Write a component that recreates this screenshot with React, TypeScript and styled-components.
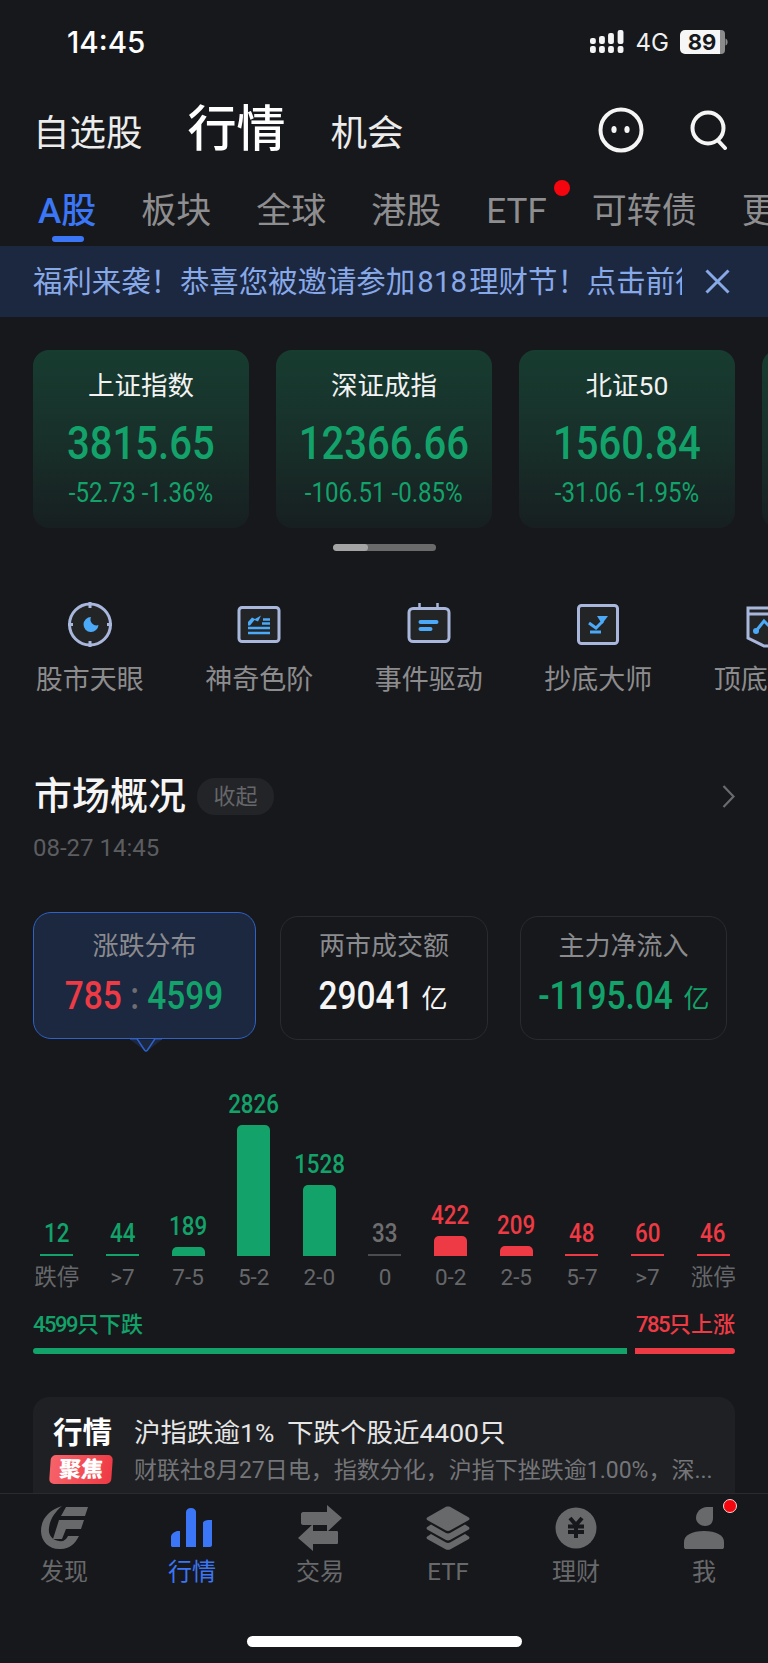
import React from 'react'
import styled, { createGlobalStyle } from 'styled-components'

const GREEN = '#12a26a'
const RED = '#ee3a44'
const BLUE = '#3a76f5'
const toneColor = { up: RED, down: GREEN, flat: '#6e6e70' }
type Tone = keyof typeof toneColor

const GlobalStyle = createGlobalStyle`
  html, body { margin: 0; padding: 0; background: #17181b; }
  body { font-family: Roboto, "Noto Sans CJK SC", sans-serif; }
`

const Page = styled.div`
  width: 768px;
  height: 1663px;
  display: flex;
  flex-direction: column;
  overflow: hidden;
  background: #17181b;
  color: #f2f2f2;
`

const Scroller = styled.main`
  flex: 1;
  min-height: 0;
  overflow: hidden;
`

/* narrow digits, the app uses a DIN style face */
const Din = styled.span<{ $x?: number }>`
  display: inline-block;
  transform: scaleX(${(p) => p.$x ?? 0.88});
`

const StatusBar = styled.div`
  height: 100px;
  box-sizing: border-box;
  padding: 24px 40px 0 67px;
  display: flex;
  justify-content: space-between;
  align-items: flex-start;
`

const Clock = styled.div`
  font-family: Inter, sans-serif;
  font-size: 29.6px;
  line-height: 36px;
  font-weight: 500;
  color: #fff;
`

const StatusIcons = styled.div`
  display: flex;
  align-items: center;
  height: 36px;
`

const Network = styled.span`
  font-family: Inter, sans-serif;
  font-size: 24px;
  color: #f0f0f0;
  margin: 0 11px 0 12px;
`

const Header = styled.header`
  height: 60px;
  padding: 0 40px 0 33px;
  display: flex;
  align-items: baseline;
  gap: 45px;
`

const HeadLink = styled.div<{ $active?: boolean }>`
  font-size: ${(p) => (p.$active ? 49 : 36.5)}px;
  line-height: 60px;
  font-weight: ${(p) => (p.$active ? 500 : 400)};
  color: ${(p) => (p.$active ? '#fff' : '#ececec')};
`

const HeadTools = styled.div`
  margin-left: auto;
  align-self: center;
  display: flex;
  align-items: center;
  gap: 46px;
`

const Tabs = styled.nav`
  height: 86px;
  box-sizing: border-box;
  padding: 30px 0 0 38px;
  display: flex;
  gap: 45px;
  overflow: hidden;
  white-space: nowrap;
`

const Tab = styled.div<{ $active?: boolean }>`
  position: relative;
  flex: none;
  font-size: 35px;
  line-height: 44px;
  height: 44px;
  color: ${(p) => (p.$active ? BLUE : '#8e8e90')};
  font-weight: ${(p) => (p.$active ? 500 : 400)};

  ${(p) =>
    p.$active &&
    `&::after {
      content: '';
      position: absolute;
      left: 14px;
      top: 46px;
      width: 32px;
      height: 6px;
      border-radius: 3px;
      background: ${BLUE};
    }`}
`

const TabDot = styled.i`
  position: absolute;
  right: -23px;
  top: -10px;
  width: 16px;
  height: 16px;
  border-radius: 50%;
  background: #f5060f;
`

const Banner = styled.div`
  height: 71px;
  box-sizing: border-box;
  padding: 0 38px 0 33px;
  display: flex;
  align-items: center;
  justify-content: space-between;
  background: #1c2740;
  color: #88a9e8;
`

const BannerText = styled.div`
  width: 649px;
  overflow: hidden;
  white-space: nowrap;
  font-size: 29.4px;
  line-height: 40px;
  word-spacing: -5px;
`

const IndexRow = styled.section`
  margin-top: 33px;
  padding-left: 33px;
  display: flex;
  gap: 27px;
  overflow: hidden;
`

const IndexCard = styled.div`
  flex: none;
  width: 216px;
  height: 178px;
  border-radius: 16px;
  background: linear-gradient(180deg, #173c30 0%, #18302a 50%, #171f20 100%);
  display: flex;
  flex-direction: column;
  align-items: center;
`

const IndexName = styled.div`
  margin-top: 18px;
  font-size: 26.5px;
  line-height: 36px;
  color: #f2f2f2;
`

const IndexValue = styled.div`
  margin-top: 12px;
  font-size: 46px;
  line-height: 54px;
  font-weight: 500;
  color: ${GREEN};
`

const IndexChange = styled.div`
  margin-top: 7px;
  font-size: 28px;
  line-height: 32px;
  color: ${GREEN};
  white-space: nowrap;
`

const PagerTrack = styled.div`
  margin: 16px auto 0;
  width: 103px;
  height: 7px;
  border-radius: 4px;
  background: #6a6a6a;
  overflow: hidden;
`

const PagerThumb = styled.div`
  width: 35px;
  height: 100%;
  border-radius: 4px;
  background: #a4a4a4;
`

const Shortcuts = styled.section`
  margin-top: 49px;
  padding-left: 5px;
  display: flex;
  overflow: hidden;
`

const Shortcut = styled.div`
  flex: none;
  width: 169.5px;
  display: flex;
  flex-direction: column;
  align-items: center;
`

const ShortcutLabel = styled.div`
  margin-top: 12px;
  font-size: 27px;
  line-height: 36px;
  color: #8c8c8e;
  white-space: nowrap;
`

const SectionHead = styled.div`
  margin-top: 80px;
  height: 37px;
  padding: 0 33px 0 34px;
  display: flex;
  align-items: center;
`

const SectionTitle = styled.h2`
  margin: 0;
  font-size: 38px;
  line-height: 37px;
  font-weight: 500;
  color: #f5f5f5;
`

const Collapse = styled.span`
  margin-left: 11px;
  width: 77px;
  height: 37px;
  border-radius: 18px;
  background: #232427;
  color: #66676a;
  font-size: 22px;
  line-height: 37px;
  text-align: center;
`

const SectionMore = styled.span`
  margin-left: auto;
  display: flex;
`

const DateLine = styled.div`
  margin: 18px 0 0 33px;
  font-size: 24px;
  line-height: 30px;
  color: #5c5d60;
`

const StatRow = styled.div`
  margin: 49px 0 0 33px;
  display: flex;
  align-items: flex-start;
  gap: 24px;

  & > :last-child {
    margin-left: 8px;
  }
`

const StatTab = styled.div<{ $active?: boolean; $w: number }>`
  position: relative;
  flex: none;
  box-sizing: border-box;
  width: ${(p) => p.$w}px;
  height: ${(p) => (p.$active ? 127 : 124)}px;
  margin-top: ${(p) => (p.$active ? 0 : 4)}px;
  padding-top: ${(p) => (p.$active ? 15 : 11)}px;
  border-radius: 18px;
  border: ${(p) => (p.$active ? '1.5px solid #2f61c6' : '1.5px solid #2a2b2e')};
  background: ${(p) => (p.$active ? '#1c2740' : 'transparent')};
  text-align: center;
`

const StatPointer = styled.svg`
  position: absolute;
  left: 96px;
  bottom: -14px;
  display: block;
`

const StatLabel = styled.div`
  font-size: 26px;
  line-height: 36px;
  color: #8a8b8e;
`

const StatValue = styled.div<{ $tone?: Tone | 'plain' }>`
  margin-top: 9px;
  height: 46px;
  display: flex;
  align-items: center;
  justify-content: center;
  white-space: nowrap;
  font-size: 38px;
  line-height: 46px;
  font-weight: 500;
  color: ${(p) => (p.$tone && p.$tone !== 'plain' ? toneColor[p.$tone] : '#f5f5f5')};
`

const StatUnit = styled.span`
  font-size: 26px;
  font-weight: 400;
  margin: 6px 8px 0 1px;
`

const Chart = styled.div`
  margin: 32px 0 0 24px;
  width: 722px;
  display: grid;
  grid-template-columns: repeat(11, 1fr);
`

const ChartCol = styled.div`
  height: 219px;
  display: flex;
  flex-direction: column;
  align-items: center;
  justify-content: flex-end;
`

const ChartCount = styled.div<{ $tone: Tone }>`
  font-size: 26px;
  line-height: 30px;
  margin-bottom: 6px;
  color: ${(p) => toneColor[p.$tone]};
  font-weight: 500;
`

const ChartBar = styled.div<{ $tone: Tone; $h: number }>`
  width: 33px;
  height: ${(p) => p.$h}px;
  border-radius: ${(p) => (p.$h > 4 ? '5px 5px 0 0' : '0')};
  background: ${(p) => (p.$tone === 'flat' ? '#4c4c4f' : toneColor[p.$tone])};
`

const ChartLabel = styled.div`
  margin-top: 7px;
  font-size: 22.5px;
  line-height: 28px;
  color: #66676a;
  white-space: nowrap;
`

const Legend = styled.div`
  margin: 19px 33px 0;
  height: 30px;
  display: flex;
  justify-content: space-between;
  font-size: 22px;
  line-height: 30px;
  font-weight: 500;
`

const LegendText = styled.span<{ $tone: Tone }>`
  color: ${(p) => toneColor[p.$tone]};
`

const LegendCount = styled.span`
  letter-spacing: -1.5px;
`

const SplitBar = styled.div`
  margin: 8px 33px 0;
  display: flex;
  gap: 8px;
`

const SplitPart = styled.div<{ $tone: Tone; $w: number }>`
  width: ${(p) => p.$w}px;
  height: 6px;
  border-radius: ${(p) => (p.$tone === 'down' ? '3px 0 0 3px' : '0 3px 3px 0')};
  background: ${(p) => toneColor[p.$tone]};
`

const NewsCard = styled.article`
  margin: 43px 33px 0;
  height: 120px;
  box-sizing: border-box;
  padding: 19px 0 0 17px;
  border-radius: 16px 16px 0 0;
  background: #1f2023;
  display: flex;
  gap: 22px;
`

const NewsTag = styled.div`
  flex: none;
  width: 62px;
  display: flex;
  flex-direction: column;
  align-items: flex-end;
`

const NewsTagTitle = styled.div`
  font-size: 29.5px;
  line-height: 34px;
  font-weight: 700;
  color: #fff;
`

const NewsBadge = styled.div`
  margin-top: 5px;
  width: 62px;
  height: 29px;
  border-radius: 5px;
  transform: skewX(-4deg);
  background: linear-gradient(100deg, #f7636a, #ee3a44);
  color: #fff;
  font-size: 22px;
  line-height: 29px;
  font-weight: 900;
  text-align: center;
`

const NewsBody = styled.div`
  min-width: 0;
`

const NewsTitle = styled.div`
  font-size: 26.5px;
  line-height: 34px;
  word-spacing: 6px;
  color: #e6e6e6;
  white-space: nowrap;
`

const NewsText = styled.div`
  margin-top: 6px;
  font-size: 23px;
  line-height: 30px;
  color: #747578;
  white-space: nowrap;
`

const BottomBar = styled.footer`
  position: relative;
  flex: none;
  height: 170px;
  box-sizing: border-box;
  border-top: 1px solid #2a2b2e;
  background: #17181b;
`

const BottomTabs = styled.div`
  display: grid;
  grid-template-columns: repeat(6, 128px);
`

const BottomTab = styled.div<{ $active?: boolean }>`
  position: relative;
  height: 96px;
  padding-top: 10px;
  box-sizing: border-box;
  display: flex;
  flex-direction: column;
  align-items: center;
  color: ${(p) => (p.$active ? BLUE : '#68696b')};
`

const BottomIcon = styled.div`
  height: 48px;
  display: flex;
  align-items: center;
  justify-content: center;
`

const BottomLabel = styled.div`
  margin-top: 4px;
  font-size: 24px;
  line-height: 32px;
`

const AlertDot = styled.i`
  position: absolute;
  left: 83px;
  top: 5px;
  width: 12px;
  height: 12px;
  border-radius: 50%;
  background: #f5060f;
  border: 1px solid #f0d8d8;
`

const HomeBar = styled.div`
  position: absolute;
  left: 247px;
  top: 142px;
  width: 275px;
  height: 11px;
  border-radius: 6px;
  background: #fff;
`

const SignalIcon = () => (
  <svg width="34" height="24" viewBox="0 0 32 24" preserveAspectRatio="none" fill="#f4f4f4">
    <rect x="0" y="16" width="5.5" height="7" rx="2" />
    <rect x="8.5" y="16" width="5.5" height="7" rx="2" />
    <rect x="17" y="16" width="5.5" height="7" rx="2" />
    <rect x="26" y="16" width="5.5" height="7" rx="2" />
    <rect x="0" y="8" width="5.5" height="6" rx="2" />
    <rect x="8.5" y="6" width="5.5" height="8" rx="2" />
    <rect x="17" y="3" width="5.5" height="11" rx="2" />
    <rect x="26" y="0" width="5.5" height="14" rx="2" />
  </svg>
)

const BatteryIcon = () => (
  <svg width="48" height="24" viewBox="0 0 48 24">
    <path d="M5 0H40V24H5A5 5 0 0 1 0 19V5A5 5 0 0 1 5 0Z" fill="#f6f6f6" />
    <path d="M40 0H41A4 4 0 0 1 45 4V20A4 4 0 0 1 41 24H40Z" fill="#8b8b8b" />
    <path d="M45.5 8.5C47 9 47.6 10.5 47.6 12S47 15 45.5 15.5Z" fill="#8b8b8b" />
    <text x="22" y="20" textAnchor="middle" fontFamily="Inter, sans-serif" fontSize="22" fontWeight="700" fill="#17181b">
      89
    </text>
  </svg>
)

const FaceIcon = () => (
  <svg width="46" height="46" viewBox="0 0 46 46" fill="none">
    <circle cx="23" cy="23" r="20.5" stroke="#f5f5f5" strokeWidth="4" />
    <ellipse cx="16" cy="22.5" rx="2.6" ry="3.6" fill="#f5f5f5" />
    <ellipse cx="29" cy="22.5" rx="2.6" ry="3.6" fill="#f5f5f5" />
  </svg>
)

const SearchIcon = () => (
  <svg width="38" height="40" viewBox="0 0 38 40" fill="none" stroke="#f5f5f5" strokeWidth="4" strokeLinecap="round">
    <circle cx="18" cy="18" r="15.5" />
    <path d="M28 30.5L35 38" />
  </svg>
)

const CloseIcon = () => (
  <svg width="25" height="25" viewBox="0 0 25 25" stroke="#88a9e8" strokeWidth="3" fill="none">
    <path d="M1.5 1.5L23.5 23.5M23.5 1.5L1.5 23.5" />
  </svg>
)

const ChevronIcon = () => (
  <svg width="13" height="23" viewBox="0 0 13 23" fill="none" stroke="#6a6b6e" strokeWidth="2.2">
    <path d="M1.5 1L11.5 11.5L1.5 22" />
  </svg>
)

const toolFrame = { stroke: '#a9b7dd', strokeWidth: 3, fill: '#232426' }
const toolInk = '#4ba9f7'

const EyeTool = () => (
  <svg width="52" height="50" viewBox="0 0 52 50">
    <circle cx="26" cy="24.5" r="20.5" {...toolFrame} />
    <path d="M26 2V8M26 41V47M4 24.5H9M43 24.5H48" stroke="#a9b7dd" strokeWidth="3" />
    <path d="M27 17A7.5 7.5 0 1 0 34.5 25A6 6 0 0 1 27 17Z" fill={toolInk} />
  </svg>
)

const ScaleTool = () => (
  <svg width="52" height="50" viewBox="0 0 52 50">
    <rect x="6" y="7.5" width="40" height="34" rx="3" {...toolFrame} />
    <path d="M15 22L19 17.5L22 19L28 15.5L25 21.5L21.5 20L17 25.5H15Z" fill={toolInk} />
    <path d="M30 19.5H37M29 23.5H37M15 28H37M15 33H37" stroke={toolInk} strokeWidth="2.5" />
  </svg>
)

const EventTool = () => (
  <svg width="52" height="50" viewBox="0 0 52 50">
    <path d="M16.5 3V9M34.5 3V9" stroke="#a9b7dd" strokeWidth="2.5" />
    <rect x="6" y="8.5" width="40" height="33" rx="4" {...toolFrame} />
    <path d="M17.5 22H33.5M17.5 29H27.5" stroke={toolInk} strokeWidth="4" strokeLinecap="round" />
  </svg>
)

const BottomTool = () => (
  <svg width="52" height="50" viewBox="0 0 52 50">
    <rect x="6.5" y="5.5" width="39" height="38" rx="3" {...toolFrame} />
    <path d="M25 16H36L30 24Z" fill={toolInk} />
    <path d="M17 23L24 28L31 21" stroke={toolInk} strokeWidth="3" fill="none" />
    <path d="M18 32H29" stroke={toolInk} strokeWidth="3" />
  </svg>
)

const PeakTool = () => (
  <svg width="52" height="50" viewBox="0 0 52 50">
    <path d="M6 8H46V46H22L6 38Z" {...toolFrame} />
    <path d="M6 14H46" stroke="#a9b7dd" strokeWidth="3" />
    <path d="M14 31L22 21L30 29" stroke={toolInk} strokeWidth="3" fill="none" />
    <circle cx="14" cy="31" r="3" fill={toolInk} />
  </svg>
)

const DiscoverIcon = () => (
  <svg width="47" height="44" viewBox="0 0 47 44" fill="currentColor">
    <path d="M21 0C8 4 0 13 0 25C0 36 9 44 20 43C28 43 34 38 38 30H27C25 34 22 36 18 35C11 34 7 29 8 22C9 13 14 6 21 0Z" />
    <path d="M25 1H47L44 10H20Z" />
    <path d="M18 14H43L40 23H25L21 33H12Z" />
  </svg>
)

const MarketIcon = () => (
  <svg width="42" height="40" viewBox="0 0 42 40" fill="currentColor">
    <path d="M0 38V29C0 26 3 24 6 23H9V39H1Z" />
    <path d="M15 39V4C15 2 17 0 20 0C23 0 25 2 25 4V39Z" />
    <path d="M32 39V15C32 13 35 12 38 12H41V37C41 38 40 39 39 39Z" />
  </svg>
)

const TradeIcon = () => (
  <svg width="44" height="46" viewBox="0 0 44 46" fill="currentColor">
    <path d="M29 0L44 13L29 27V20H5C4 20 3 19 3 18V9C3 8 4 7 5 7H29Z" />
    <path d="M15 19V26H39C40 26 40 27 40 28V37C40 38 40 39 39 39H15V46L0 33Z" />
  </svg>
)

const StackIcon = () => (
  <svg width="44" height="44" viewBox="0 0 44 44" fill="currentColor">
    <path d="M20 .8C21 .3 23 .3 24 .8L42 11C44 12 44 13.5 42 14.5L24 24.5C23 25 21 25 20 24.5L2 14.5C0 13.5 0 12 2 11Z" />
    <path d="M5 18.5L20 27C21 27.6 23 27.6 24 27L39 18.5L42 20.5C44 21.5 44 23 42 24L24 34C23 34.6 21 34.6 20 34L2 24C0 23 0 21.5 2 20.5Z" />
    <path d="M5 28L20 36.5C21 37 23 37 24 36.5L39 28L42 30C44 31 44 32.5 42 33.5L24 43.4C23 44 21 44 20 43.4L2 33.5C0 32.5 0 31 2 30Z" />
  </svg>
)

const WealthIcon = () => (
  <svg width="42" height="42" viewBox="0 0 42 42">
    <circle cx="21" cy="21" r="20.5" fill="currentColor" />
    <path
      d="M15 11L21 18L27 11M13 19.5H29M13 25H29M21 18V31"
      stroke="#17181b"
      strokeWidth="4"
      fill="none"
    />
  </svg>
)

const ProfileIcon = () => (
  <svg width="40" height="44" viewBox="0 0 40 44" fill="currentColor">
    <path d="M29 1V12C29 17 26 20 21 20C16 20 12 16 12 12C12 6 17 1 23 1Z" />
    <path d="M0 41V36C0 29 8 25 20 25C32 25 40 29 40 36V41C40 42.5 39 43 38 43H2C1 43 0 42.5 0 41Z" />
  </svg>
)

const indices = [
  { name: '上证指数', value: '3815.65', change: '-52.73 -1.36%' },
  { name: '深证成指', value: '12366.66', change: '-106.51 -0.85%' },
  { name: '北证50', value: '1560.84', change: '-31.06 -1.95%' },
]

const tools = [
  { label: '股市天眼', Icon: EyeTool },
  { label: '神奇色阶', Icon: ScaleTool },
  { label: '事件驱动', Icon: EventTool },
  { label: '抄底大师', Icon: BottomTool },
  { label: '顶底雷达', Icon: PeakTool },
]

const distribution: { count: number; label: string; tone: Tone; h: number }[] = [
  { count: 12, label: '跌停', tone: 'down', h: 2 },
  { count: 44, label: '>7', tone: 'down', h: 2 },
  { count: 189, label: '7-5', tone: 'down', h: 9 },
  { count: 2826, label: '5-2', tone: 'down', h: 131 },
  { count: 1528, label: '2-0', tone: 'down', h: 71 },
  { count: 33, label: '0', tone: 'flat', h: 2 },
  { count: 422, label: '0-2', tone: 'up', h: 20 },
  { count: 209, label: '2-5', tone: 'up', h: 10 },
  { count: 48, label: '5-7', tone: 'up', h: 2 },
  { count: 60, label: '>7', tone: 'up', h: 2 },
  { count: 46, label: '涨停', tone: 'up', h: 2 },
]

const bottomTabs = [
  { label: '发现', Icon: DiscoverIcon },
  { label: '行情', Icon: MarketIcon, active: true },
  { label: '交易', Icon: TradeIcon },
  { label: 'ETF', Icon: StackIcon },
  { label: '理财', Icon: WealthIcon },
  { label: '我', Icon: ProfileIcon, alert: true },
]

const App = () => (
  <Page>
    <GlobalStyle />
    <Scroller>
      <StatusBar>
        <Clock>14:45</Clock>
        <StatusIcons>
          <SignalIcon />
          <Network>4G</Network>
          <BatteryIcon />
        </StatusIcons>
      </StatusBar>

      <Header>
        <HeadLink>自选股</HeadLink>
        <HeadLink $active>行情</HeadLink>
        <HeadLink>机会</HeadLink>
        <HeadTools>
          <FaceIcon />
          <SearchIcon />
        </HeadTools>
      </Header>

      <Tabs>
        <Tab $active>A股</Tab>
        <Tab>板块</Tab>
        <Tab>全球</Tab>
        <Tab>港股</Tab>
        <Tab>
          ETF
          <TabDot />
        </Tab>
        <Tab>可转债</Tab>
        <Tab>更多</Tab>
      </Tabs>

      <Banner>
        <BannerText>福利来袭！恭喜您被邀请参加 818 理财节！点击前往</BannerText>
        <CloseIcon />
      </Banner>

      <IndexRow>
        {indices.map((item) => (
          <IndexCard key={item.name}>
            <IndexName>{item.name}</IndexName>
            <IndexValue>
              <Din $x={0.87}>{item.value}</Din>
            </IndexValue>
            <IndexChange>
              <Din $x={0.86}>{item.change}</Din>
            </IndexChange>
          </IndexCard>
        ))}
        <IndexCard />
      </IndexRow>
      <PagerTrack>
        <PagerThumb />
      </PagerTrack>

      <Shortcuts>
        {tools.map(({ label, Icon }) => (
          <Shortcut key={label}>
            <Icon />
            <ShortcutLabel>{label}</ShortcutLabel>
          </Shortcut>
        ))}
      </Shortcuts>

      <SectionHead>
        <SectionTitle>市场概况</SectionTitle>
        <Collapse>收起</Collapse>
        <SectionMore>
          <ChevronIcon />
        </SectionMore>
      </SectionHead>
      <DateLine>08-27 14:45</DateLine>

      <StatRow>
        <StatTab $active $w={223}>
          <StatLabel>涨跌分布</StatLabel>
          <StatValue>
            <Din>
              <LegendText $tone="up">785</LegendText>
              <LegendText $tone="flat"> : </LegendText>
              <LegendText $tone="down">4599</LegendText>
            </Din>
          </StatValue>
          <StatPointer width="32" height="14" viewBox="0 0 32 14">
            <path d="M0 1.5H32L18 12.5Q16 14 14.5 12.5Z" fill="#1c2740" />
            <path d="M0 .8H7L14.5 12Q16 14 17.5 12L25 .8H32" fill="none" stroke="#2f61c6" strokeWidth="1.5" />
          </StatPointer>
        </StatTab>
        <StatTab $w={208}>
          <StatLabel>两市成交额</StatLabel>
          <StatValue>
            <Din>29041</Din>
            <StatUnit>亿</StatUnit>
          </StatValue>
        </StatTab>
        <StatTab $w={207}>
          <StatLabel>主力净流入</StatLabel>
          <StatValue $tone="down">
            <Din>-1195.04</Din>
            <StatUnit>亿</StatUnit>
          </StatValue>
        </StatTab>
      </StatRow>

      <Chart>
        {distribution.map((col, i) => (
          <ChartCol key={i}>
            <ChartCount $tone={col.tone}>
              <Din $x={0.86}>{col.count}</Din>
            </ChartCount>
            <ChartBar $tone={col.tone} $h={col.h} />
            <ChartLabel>{col.label}</ChartLabel>
          </ChartCol>
        ))}
      </Chart>

      <Legend>
        <LegendText $tone="down">
          <LegendCount>4599</LegendCount>只下跌
        </LegendText>
        <LegendText $tone="up">
          <LegendCount>785</LegendCount>只上涨
        </LegendText>
      </Legend>
      <SplitBar>
        <SplitPart $tone="down" $w={594} />
        <SplitPart $tone="up" $w={100} />
      </SplitBar>

      <NewsCard>
        <NewsTag>
          <NewsTagTitle>行情</NewsTagTitle>
          <NewsBadge>聚焦</NewsBadge>
        </NewsTag>
        <NewsBody>
          <NewsTitle>沪指跌逾1% 下跌个股近4400只</NewsTitle>
          <NewsText>财联社8月27日电，指数分化，沪指下挫跌逾1.00%，深...</NewsText>
        </NewsBody>
      </NewsCard>
    </Scroller>

    <BottomBar>
      <BottomTabs>
        {bottomTabs.map(({ label, Icon, active, alert }) => (
          <BottomTab key={label} $active={active}>
            <BottomIcon>
              <Icon />
            </BottomIcon>
            <BottomLabel>{label}</BottomLabel>
            {alert && <AlertDot />}
          </BottomTab>
        ))}
      </BottomTabs>
      <HomeBar />
    </BottomBar>
  </Page>
)

export default App
